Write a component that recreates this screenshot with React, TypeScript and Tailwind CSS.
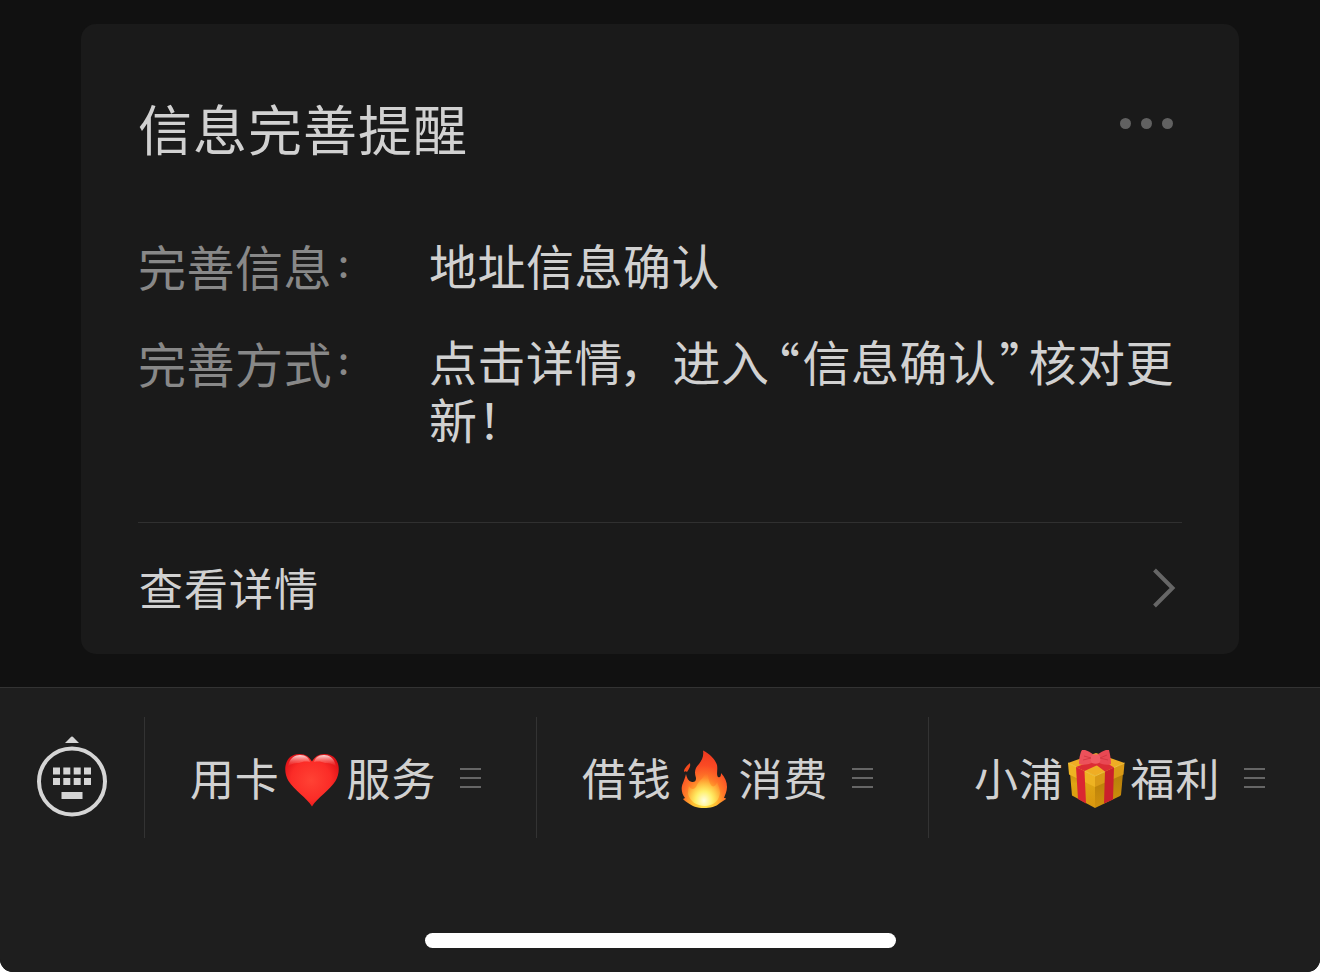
import type { ReactNode } from 'react'

function HeartIcon() {
  return (
    <svg viewBox="0 0 58 58" className="size-[58px]">
      <defs>
        <radialGradient id="heart-fill" cx="0.48" cy="0.5" r="0.62">
          <stop offset="0" stopColor="#ff4234" />
          <stop offset="0.6" stopColor="#fb2c27" />
          <stop offset="1" stopColor="#d90d14" />
        </radialGradient>
        <linearGradient id="heart-shine" x1="0" y1="0" x2="0" y2="1">
          <stop offset="0" stopColor="#fff" stopOpacity="0.85" />
          <stop offset="1" stopColor="#ff5a50" stopOpacity="0" />
        </linearGradient>
      </defs>
      <path
        d="M29 56.500C24 48 11 40 5.500 31C-1 20 2 4 16.500 4c6 0 10 3 12.500 7.500c2.500-4.500 6.500-7.500 12.500-7.500c14.500 0 17.500 16 11 27C47 40 34 48 29 56.500Z"
        fill="url(#heart-fill)"
      />
      <path d="M5 17C6 9 11 5 17 5c6 0 9 3 10 7c-5-1-8 0-11 1c-5 0-9 1-11 4Z" fill="url(#heart-shine)" />
      <path d="M53 17C52 9 47 5 41 5c-6 0-9 3-10 7c5-1 8 0 11 1c5 0 9 1 11 4Z" fill="url(#heart-shine)" />
    </svg>
  )
}

function FireIcon() {
  return (
    <svg viewBox="0 0 58 58" className="size-[58px]">
      <defs>
        <radialGradient id="fire-outer" cx="0.5" cy="0.92" r="0.88">
          <stop offset="0" stopColor="#ffe94a" />
          <stop offset="0.3" stopColor="#ffbc30" />
          <stop offset="0.5" stopColor="#ff7a28" />
          <stop offset="0.75" stopColor="#fa4a24" />
          <stop offset="1" stopColor="#ef3a20" />
        </radialGradient>
        <radialGradient id="fire-core" cx="0.5" cy="0.85" r="0.75">
          <stop offset="0" stopColor="#fffde0" />
          <stop offset="0.35" stopColor="#fff06a" />
          <stop offset="1" stopColor="#ffa52a" stopOpacity="0" />
        </radialGradient>
      </defs>
      <path
        d="M28 0.500C35 4 40 9 42 15c1 5-1 9 1 12c2 1 3 0 3-4c4 4 6 9 6 14c0 4-2 8-3 11c1 0 2 0 2 1c-2 1-4 3-6 4c-4 4-10 5-16 5c-7 0-12-2-16-5c-2-1-4-3-5-4l2-1C6 43 6 37 8 33c1-3 2-5 3-9c1 4 2 7 6 8c3 0 4-1 4-4c-2-6-1-10 3-14C27 10 29 6 28 0.500Z"
        fill="url(#fire-outer)"
      />
      <path d="M15 13c1 3-1 6-3 9c-1-1-2-1-3 0c0-4 3-6 6-9Z" fill="#f34a1d" />
      <path
        d="M31 20c3 6 2 11 5 15c2 3 5 1 6-3c2 4 3 8 3 11c-1 8-7 13-15 13c-9 0-15-5-17-12c0-3 0-6 1-8c2 4 6 4 8-1c2-5 8-7 9-15Z"
        fill="url(#fire-core)"
      />
    </svg>
  )
}

function GiftIcon() {
  return (
    <svg viewBox="0 0 58 58" className="size-[58px]">
      <defs>
        <linearGradient id="gift-left" x1="0" y1="0" x2="0" y2="1">
          <stop offset="0" stopColor="#c58d10" />
          <stop offset="0.3" stopColor="#dfa514" />
          <stop offset="1" stopColor="#d9960e" />
        </linearGradient>
        <linearGradient id="gift-right" x1="0" y1="0" x2="0" y2="1">
          <stop offset="0" stopColor="#b57d0a" />
          <stop offset="1" stopColor="#d0910c" />
        </linearGradient>
      </defs>
      {/* Box */}
      <path d="M3 23L28 35V58L5 45.500Z" fill="url(#gift-left)" />
      <path d="M28 35L56 23L54 45Q53 46 52 46.500L28 58Z" fill="url(#gift-right)" />
      {/* Lid */}
      <path d="M1 13L29 3L57.500 13L28 26Z" fill="#efad24" />
      <path d="M1 13L28 26V37L2 24.500Z" fill="#eeb322" />
      <path d="M28 26L57.500 13L56.500 24.500L28 37Z" fill="#d99a16" />
      <path d="M1 13L28 26L57.500 13" fill="none" stroke="#ffd04a" strokeWidth="0.800" />
      {/* Ribbon */}
      <path d="M9 17L28 10L35 13L17.500 21Z" fill="#dc2c34" />
      <path d="M24 11L32 8L47 17.500L38 21.500Z" fill="#dc2c34" />
      <path d="M9 17L17.500 21L19 53.500L11 49Z" fill="#da2731" />
      <path d="M38 21.500L47 17.500L46 49.500L37 53.500Z" fill="#cb202b" />
      {/* Bow */}
      <path d="M27 5C22 1 17-1 15 0C13 3 12 9 12 14C16 16 23 14 27 12Z" fill="#ec515a" />
      <path d="M30 5C35 1 40-1 42 0C43 4 44 9 44 14C40 16 34 14 30 12Z" fill="#e94853" />
      <path d="M25 5c2-1 5-1 7 0c2 2 2 6 0 8c-2 1-5 1-7 0c-2-2-2-6 0-8Z" fill="#f25c64" />
      <path d="M17 6l7 2l-8 2M40 5l-7 3l8 2" fill="none" stroke="#cf3540" strokeWidth="0.800" />
    </svg>
  )
}

function KeyboardIcon() {
  const keys = [53, 63.3, 73.7, 84]
  return (
    <svg viewBox="34 734 76 86" className="h-[86px] w-[76px]" fill="#d5d5d5">
      <path d="M65 743L71.200 736.800Q72 736 72.800 736.800L79 743Z" />
      <circle cx="72" cy="781.500" r="33" fill="none" stroke="#d5d5d5" strokeWidth="4" />
      {keys.map((x) => (
        <g key={x}>
          <rect x={x} y="767.500" width="7" height="7" />
          <rect x={x} y="778" width="7" height="7" />
        </g>
      ))}
      <rect x="61.500" y="792" width="21" height="7" />
    </svg>
  )
}

function MenuLines() {
  return (
    <div className="flex w-[21px] flex-col gap-[7px]">
      <div className="h-[2px] bg-[#666]" />
      <div className="h-[2px] bg-[#666]" />
      <div className="h-[2px] bg-[#666]" />
    </div>
  )
}

// Small raised colon, tighter than the full-size glyph
function Colon() {
  return <span className="relative -top-[9px] ml-[4px] text-[30px] leading-none font-bold">：</span>
}

interface MenuItemProps {
  before: string
  after: string
  icon: ReactNode
}

function MenuItem({ before, after, icon }: MenuItemProps) {
  return (
    <div className="flex h-[121px] w-[392px] shrink-0 items-center border-l border-[#333] pl-[45px] text-[44px] tracking-[0.8px]">
      <span className="-mt-px leading-[64px]">{before}</span>
      <span className="mt-[3px] mr-[6px] ml-[3px]">{icon}</span>
      <span className="-mt-px leading-[64px]">{after}</span>
      <span className="ml-[24px]">
        <MenuLines />
      </span>
    </div>
  )
}

export default function App() {
  return (
    <div className="h-[972px] w-[1320px] overflow-hidden bg-white font-['Noto_Sans_CJK_SC',sans-serif] text-[#d1d1d1]">
      <div className="flex h-full flex-col overflow-hidden rounded-b-[13px] bg-[#111]">
        {/* Message card */}
        <main className="h-[687px] px-[81px] pt-[24px]">
          <section className="flex h-[630px] flex-col rounded-[15px] bg-[#1a1a1a] px-[57px]">
            <div className="flex h-[211px] items-start justify-between pt-[64px] pr-[9.5px]">
              <h1 className="text-[54px] leading-[80px] tracking-[1px]">信息完善提醒</h1>
              <div className="mt-[29.5px] flex gap-[10px]">
                <i className="size-[11px] rounded-full bg-[#616161]" />
                <i className="size-[11px] rounded-full bg-[#616161]" />
                <i className="size-[11px] rounded-full bg-[#616161]" />
              </div>
            </div>

            <dl className="flex h-[287px] flex-col gap-[38px] text-[48px] leading-[58px] tracking-[0.5px]">
              <div className="flex">
                <dt className="w-[291px] pt-px text-[#888]">
                  完善信息
                  <Colon />
                </dt>
                <dd>地址信息确认</dd>
              </div>
              <div className="-mt-px flex">
                <dt className="w-[291px] pt-[2px] text-[#888]">
                  完善方式
                  <Colon />
                </dt>
                <dd className="whitespace-nowrap">
                  点击详情
                  <span className="-ml-[4px] mr-[5px]">，</span>
                  进入
                  <span className="relative top-[2px] inline-block w-[33px] pr-[2px] text-right leading-none [font-feature-settings:'halt']">“</span>
                  信息确认
                  <span className="relative top-[2px] inline-block w-[32px] pl-[3px] leading-none [font-feature-settings:'halt']">”</span>
                  核对更
                  <br />
                  新！
                </dd>
              </div>
            </dl>

            <div className="flex h-[132px] items-center justify-between border-t border-[#303030] pr-[6px]">
              <span className="-mt-[4px] ml-px text-[44px] leading-[64px] tracking-[1px]">查看详情</span>
              <svg viewBox="0 0 24 40" className="-mt-[2px] h-[40px] w-[24px]" fill="none" stroke="#666" strokeWidth="4">
                <path d="M2.500 2L20.500 20L2.500 38" />
              </svg>
            </div>
          </section>
        </main>

        {/* Service menu */}
        <footer className="flex h-[285px] flex-col border-t border-[#333] bg-[#1e1e1e]">
          <div className="flex pt-[29px]">
            <div className="flex w-[144px] shrink-0 justify-center pt-[17px]">
              <KeyboardIcon />
            </div>
            <MenuItem before="用卡" after="服务" icon={<HeartIcon />} />
            <MenuItem before="借钱" after="消费" icon={<FireIcon />} />
            <MenuItem before="小浦" after="福利" icon={<GiftIcon />} />
          </div>
          <div className="mt-[95px] ml-[425px] h-[15px] w-[471px] rounded-full bg-white" />
        </footer>
      </div>
    </div>
  )
}
